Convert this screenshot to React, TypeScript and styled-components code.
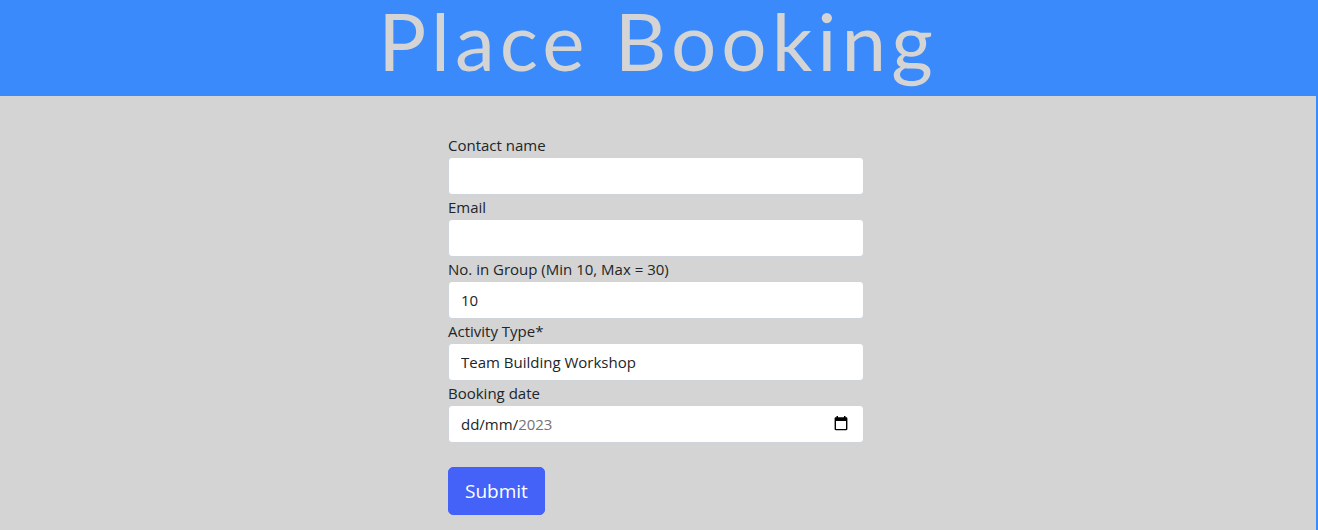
import React from "react";
import styled, { createGlobalStyle, css } from "styled-components";

const GlobalStyle = createGlobalStyle`
  *, *::before, *::after { box-sizing: border-box; }
  html, body, #root { height: 100%; }
  body {
    margin: 0;
    background: #3b8afb;
    color: #212529;
    font-family: "Open Sans", sans-serif;
    font-size: 15px;
    line-height: 24px;
  }
`;

const Page = styled.div`
  display: flex;
  flex-direction: column;
  min-height: 100%;
`;

const Header = styled.header`
  padding: 0 2px 16px 0;
  background: #3b8afb;
`;

const Title = styled.h1`
  margin: 0;
  color: #d4d4d4;
  font: 400 80px/80px Lato, sans-serif;
  letter-spacing: 5px;
  text-align: center;
`;

const Main = styled.main`
  flex: 1;
  margin-right: 2px;
  padding: 37px 4px 15px 0;
  background: #d4d4d4;
`;

const Form = styled.form`
  width: 100%;
  max-width: 416px;
  margin: 0 auto;
`;

const Label = styled.label`
  display: block;
`;

const control = css`
  width: 100%;
  height: 38px;
  padding: 6px 12px;
  border: 1px solid #ced4da;
  border-radius: 4px;
  background: #fff;
`;

const fieldText = css`
  color: #212529;
  font: inherit;
`;

const Input = styled.input`
  ${control}
  ${fieldText}
  display: block;
  appearance: textfield;
  &::-webkit-inner-spin-button { display: none; }
`;

const Select = styled.select`
  ${control}
  ${fieldText}
  display: block;
  appearance: none;
`;

const DateField = styled.div`
  ${control}
  display: flex;
  align-items: center;
`;

const DatePart = styled.input<{ $muted?: boolean }>`
  ${fieldText}
  field-sizing: content;
  padding: 0;
  border: 0;
  outline: 0;
  background: none;
  color: ${(p) => (p.$muted ? "#757575" : "#212529")};
`;

const PickerButton = styled.button`
  display: flex;
  margin-left: auto;
  padding: 0 3px 2px;
  border: 0;
  background: none;
  color: #000;
`;

const SubmitButton = styled.button`
  margin-top: 24px;
  padding: 8px 16px;
  border: 1px solid #4461f8;
  border-radius: 5px;
  background: #4461f8;
  color: #fff;
  font: inherit;
  font-size: 19px;
  line-height: 30px;
`;

const CalendarIcon = () => (
  <svg width="14" height="15" viewBox="0 0 14 15" aria-hidden="true">
    <path
      fill="currentColor"
      fillRule="evenodd"
      d="M2.5 0H4v1.3h6V0h1.5v1.3h.7c.7 0 1.2.5 1.2 1.2v10.6c0 .7-.5 1.2-1.2 1.2H1.8c-.7 0-1.2-.5-1.2-1.2V2.500c0-.7.5-1.200 1.200-1.200h.7zM2 5v8h10V5z"
    />
  </svg>
);

export default function App() {
  return (
    <>
      <GlobalStyle />
      <Page>
        <Header>
          <Title>Place Booking</Title>
        </Header>
        <Main>
          <Form onSubmit={(e) => e.preventDefault()}>
            <Label htmlFor="contact">Contact name</Label>
            <Input id="contact" type="text" />
            <Label htmlFor="email">Email</Label>
            <Input id="email" type="email" />
            <Label htmlFor="group">No. in Group (Min 10, Max = 30)</Label>
            <Input id="group" type="number" min={10} max={30} defaultValue={10} />
            <Label htmlFor="activity">Activity Type*</Label>
            <Select id="activity">
              <option>Team Building Workshop</option>
            </Select>
            <Label htmlFor="date">Booking date</Label>
            <DateField>
              <DatePart id="date" type="text" defaultValue="dd/mm/" />
              <DatePart $muted type="text" aria-label="Booking year" defaultValue="2023" />
              <PickerButton type="button" aria-label="Open calendar">
                <CalendarIcon />
              </PickerButton>
            </DateField>
            <SubmitButton type="submit">Submit</SubmitButton>
          </Form>
        </Main>
      </Page>
    </>
  );
}
